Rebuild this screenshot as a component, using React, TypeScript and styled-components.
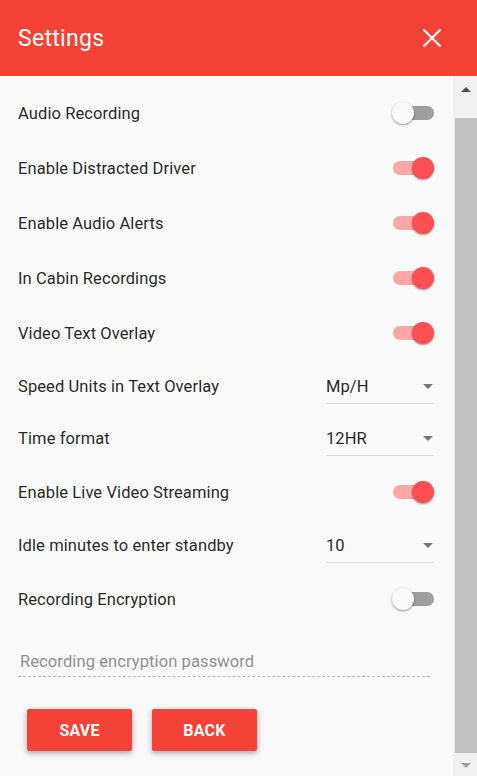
import React, { useState } from 'react'
import styled, { createGlobalStyle, css } from 'styled-components'

const GlobalStyle = createGlobalStyle`
    html, body {
        margin: 0;
        padding: 0;
        background: #fafafa;
        font-family: Roboto, "Noto Sans", Arial, sans-serif;
    }
    * {
        box-sizing: border-box;
    }
`

const Page = styled.div`
    width: 477px;
    height: 776px;
    display: flex;
    flex-direction: column;
    background: #fafafa;
    overflow: hidden;
`

const Header = styled.div`
    height: 76px;
    flex: 0 0 76px;
    background: #f44336;
    display: flex;
    align-items: center;
    justify-content: space-between;
    padding: 0 32px 0 18px;
`

const Title = styled.div`
    color: #fff;
    font-size: 23px;
    font-weight: 400;
    letter-spacing: 0.3px;
`

const CloseButton = styled.button`
    width: 26px;
    height: 26px;
    border: 0;
    padding: 0;
    background: transparent;
    display: flex;
    align-items: center;
    justify-content: center;
    cursor: pointer;
`

const Body = styled.div`
    flex: 1;
    display: flex;
    min-height: 0;
`

const Content = styled.div`
    flex: 1;
    padding: 9.5px 19px 0 18px;
    display: flex;
    flex-direction: column;
`

const SettingRow = styled.div<{ $height: number }>`
    height: ${(p) => p.$height}px;
    display: flex;
    align-items: center;
    justify-content: space-between;
`

const Label = styled.div`
    font-size: 16.5px;
    letter-spacing: 0.1px;
    color: rgba(0, 0, 0, 0.87);
`

const SwitchBox = styled.div`
    position: relative;
    width: 42px;
    height: 22px;
    cursor: pointer;
`

const SwitchTrack = styled.div<{ $on: boolean }>`
    position: absolute;
    left: 1px;
    right: 0;
    top: 4px;
    height: 14px;
    border-radius: 7px;
    background: ${(p) => (p.$on ? '#ffa6a6' : '#9e9e9e')};
`

const SwitchThumb = styled.div<{ $on: boolean }>`
    position: absolute;
    top: 0;
    width: 22px;
    height: 22px;
    border-radius: 50%;
    box-shadow: 0 1px 3px rgba(0, 0, 0, 0.3), 0 1px 1px rgba(0, 0, 0, 0.14);
    ${(p) => (p.$on
        ? css`
            left: 20px;
            background: #ff4f52;
        `
        : css`
            left: 0;
            background: #fafafa;
        `)}
`

const SelectBox = styled.div`
    width: 108px;
    height: 34px;
    display: flex;
    align-items: center;
    justify-content: space-between;
    border-bottom: 1px solid #dcdcdc;
    padding-right: 1px;
    cursor: pointer;
`

const SelectValue = styled.span`
    font-size: 16.5px;
    letter-spacing: 0.1px;
    color: rgba(0, 0, 0, 0.87);
`

const Caret = styled.span`
    width: 0;
    height: 0;
    border-left: 5px solid transparent;
    border-right: 5px solid transparent;
    border-top: 5px solid #757575;
    margin-top: 1px;
`

const PasswordInput = styled.input`
    margin-top: 24.5px;
    width: 412px;
    border: 0;
    border-bottom: 1px dashed #b8b8b8;
    background: transparent;
    font-family: inherit;
    font-size: 16.5px;
    letter-spacing: 0.1px;
    line-height: 20px;
    height: 26px;
    padding: 0 0 5px 2px;
    color: rgba(0, 0, 0, 0.87);
    outline: none;

    &::placeholder {
        color: #8f8f8f;
    }
`

const ButtonRow = styled.div`
    display: flex;
    gap: 20px;
    margin-top: 32px;
    padding-left: 9px;
`

const ActionButton = styled.button`
    width: 105px;
    height: 42px;
    border: 0;
    border-radius: 2px;
    background: #f44336;
    color: #fff;
    font-family: inherit;
    font-size: 16px;
    font-weight: 700;
    letter-spacing: 0.2px;
    box-shadow: 0 2px 5px rgba(0, 0, 0, 0.26), 0 2px 10px rgba(0, 0, 0, 0.12);
    cursor: pointer;
`

const Scrollbar = styled.div`
    width: 24px;
    flex: 0 0 24px;
    background: #f1f1f1;
    display: flex;
    flex-direction: column;
`

const ScrollButton = styled.div<{ $height: number }>`
    height: ${(p) => p.$height}px;
    display: flex;
    align-items: center;
    justify-content: center;
    padding-left: 2px;
`

const ArrowUp = styled.span`
    width: 0;
    height: 0;
    border-left: 5px solid transparent;
    border-right: 5px solid transparent;
    border-bottom: 5px solid #505050;
`

const ArrowDown = styled.span`
    width: 0;
    height: 0;
    border-left: 5px solid transparent;
    border-right: 5px solid transparent;
    border-top: 5px solid #a3a3a3;
`

const ScrollTrack = styled.div`
    flex: 1;
    padding: 16px 0 1px 2px;
    display: flex;
`

const ScrollThumb = styled.div`
    flex: 1;
    background: #c1c1c1;
`

const CloseIcon = () => (
    <svg width="18" height="18" viewBox="0 0 18 18">
        <path d="M1 1 L17 17 M17 1 L1 17" stroke="#fff" strokeWidth="2.2" strokeLinecap="square" />
    </svg>
)

const Switch = ({ on, onChange }: { on: boolean, onChange: () => void }) => (
    <SwitchBox onClick={onChange}>
        <SwitchTrack $on={on} />
        <SwitchThumb $on={on} />
    </SwitchBox>
)

const Select = ({ value }: { value: string }) => (
    <SelectBox>
        <SelectValue>{value}</SelectValue>
        <Caret />
    </SelectBox>
)

type Item =
    | { kind: 'switch', key: string, label: string }
    | { kind: 'select', key: string, label: string, value: string }

const items: Item[] = [
    { kind: 'switch', key: 'audio', label: 'Audio Recording' },
    { kind: 'switch', key: 'distracted', label: 'Enable Distracted Driver' },
    { kind: 'switch', key: 'alerts', label: 'Enable Audio Alerts' },
    { kind: 'switch', key: 'cabin', label: 'In Cabin Recordings' },
    { kind: 'switch', key: 'overlay', label: 'Video Text Overlay' },
    { kind: 'select', key: 'speed', label: 'Speed Units in Text Overlay', value: 'Mp/H' },
    { kind: 'select', key: 'time', label: 'Time format', value: '12HR' },
    { kind: 'switch', key: 'live', label: 'Enable Live Video Streaming' },
    { kind: 'select', key: 'idle', label: 'Idle minutes to enter standby', value: '10' },
    { kind: 'switch', key: 'encryption', label: 'Recording Encryption' },
]

const App = () => {
    const [flags, setFlags] = useState<Record<string, boolean>>({
        audio: false,
        distracted: true,
        alerts: true,
        cabin: true,
        overlay: true,
        live: true,
        encryption: false,
    })

    const toggle = (key: string) => setFlags((f) => ({ ...f, [key]: !f[key] }))

    return (
        <Page>
            <GlobalStyle />
            <Header>
                <Title>Settings</Title>
                <CloseButton aria-label="Close">
                    <CloseIcon />
                </CloseButton>
            </Header>
            <Body>
                <Content>
                    {items.map((item) => (
                        <SettingRow key={item.key} $height={item.kind === 'switch' ? 55 : 52}>
                            <Label>{item.label}</Label>
                            {item.kind === 'switch'
                                ? <Switch on={flags[item.key]} onChange={() => toggle(item.key)} />
                                : <Select value={item.value} />}
                        </SettingRow>
                    ))}
                    <PasswordInput type="password" placeholder="Recording encryption password" />
                    <ButtonRow>
                        <ActionButton>SAVE</ActionButton>
                        <ActionButton>BACK</ActionButton>
                    </ButtonRow>
                </Content>
                <Scrollbar>
                    <ScrollButton $height={26}><ArrowUp /></ScrollButton>
                    <ScrollTrack><ScrollThumb /></ScrollTrack>
                    <ScrollButton $height={22}><ArrowDown /></ScrollButton>
                </Scrollbar>
            </Body>
        </Page>
    )
}

export default App
